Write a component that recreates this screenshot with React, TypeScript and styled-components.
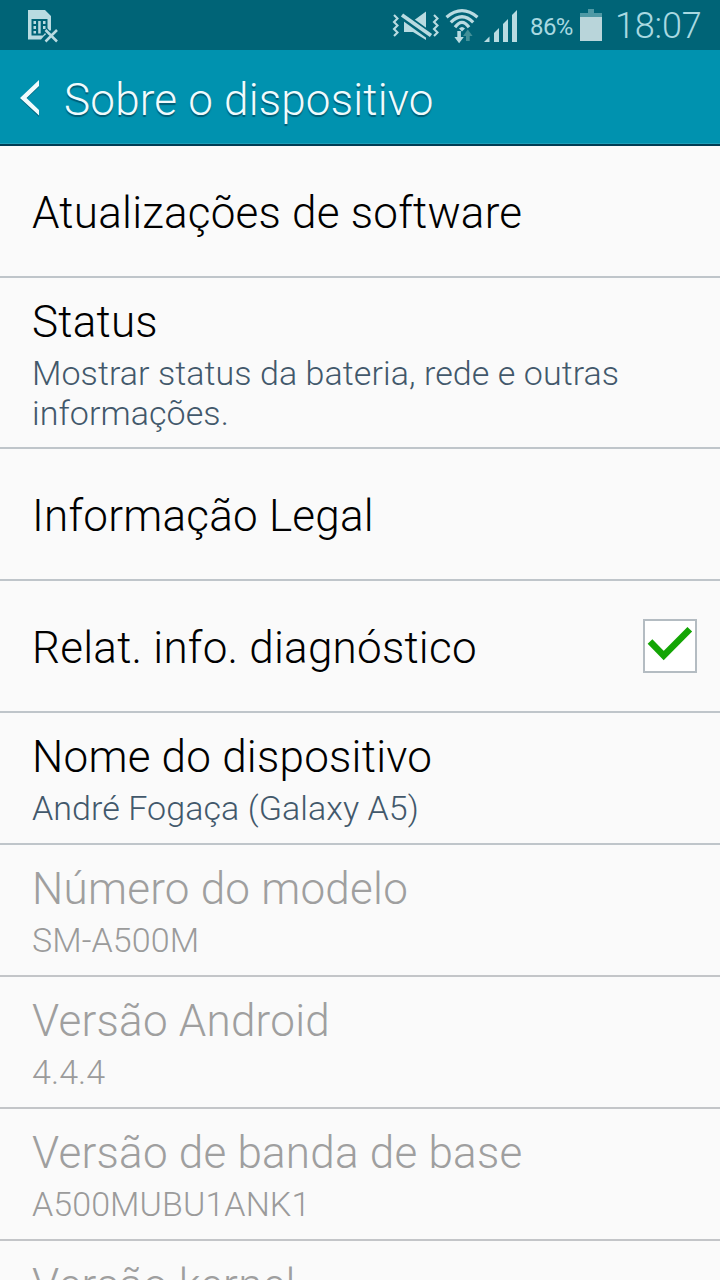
import React from "react";
import styled, { createGlobalStyle } from "styled-components";

const GlobalStyle = createGlobalStyle`
  * { box-sizing: border-box; }
  html, body { margin: 0; padding: 0; }
  body {
    background: #fafafa;
    font-family: Roboto, "Liberation Sans", sans-serif;
    font-weight: 300;
  }
`;

const Screen = styled.div`
  width: 720px;
  height: 1280px;
  overflow: hidden;
  display: flex;
  flex-direction: column;
  background: #fafafa;
`;

const StatusBar = styled.header`
  flex: none;
  height: 50px;
  padding: 0 19px 0 27px;
  display: flex;
  justify-content: space-between;
  background: #006477;
  color: #a9d9e1;
`;

const StatusIcons = styled.div`
  display: flex;
  height: 50px;

  svg { display: block; flex: none; }
`;

const BatteryPercent = styled.span`
  width: 50px;
  padding-left: 10px;
  font-size: 24px;
  line-height: 54px;
  font-weight: 400;
  white-space: nowrap;
  letter-spacing: -0.6px;
`;

const Clock = styled.span`
  width: 88px;
  padding-left: 2px;
  font-size: 36px;
  line-height: 52px;
  letter-spacing: -0.2px;
  white-space: nowrap;
`;

const ActionBar = styled.nav`
  flex: none;
  height: 96px;
  padding-left: 19px;
  display: flex;
  align-items: center;
  background: #0092af;
  border-bottom: 2px solid #003c53;
  box-shadow: inset 0 -1px 0 #1e9fb8;
`;

const BackButton = styled.button`
  width: 45px;
  height: 94px;
  padding: 0;
  border: 0;
  background: none;

  svg { display: block; }
`;

const Title = styled.h1`
  margin: 6px 0 0;
  color: #f0fbfd;
  font-size: 44px;
  line-height: 52px;
  font-weight: 300;
  letter-spacing: 0.2px;
  white-space: nowrap;
  text-shadow: 0 2px 1px rgba(0, 50, 70, 0.55);
`;

const List = styled.main`
  display: flex;
  flex-direction: column;
`;

const Row = styled.section<{ $height?: number; $disabled?: boolean }>`
  flex: none;
  height: ${(p) => p.$height ?? 132}px;
  padding: 0 23px 0 32px;
  display: flex;
  align-items: center;
  justify-content: space-between;
  border-bottom: 2px solid ${(p) => (p.$disabled ? "#c3c5c8" : "#bfc5ca")};
  color: ${(p) => (p.$disabled ? "#9f9f9f" : "#000000")};
`;

const RowText = styled.div`
  padding-top: 3px;
  display: flex;
  flex-direction: column;
`;

const Label = styled.span`
  font-size: 44px;
  line-height: 52px;
  letter-spacing: 0.24px;
  white-space: nowrap;
`;

const Summary = styled.span<{ $disabled?: boolean }>`
  margin-top: 5px;
  color: ${(p) => (p.$disabled ? "#9b9b9b" : "#42586b")};
  font-size: 34px;
  line-height: 40px;
  letter-spacing: 0.07px;
  white-space: pre-line;
`;

const CheckBox = styled.span`
  width: 54px;
  height: 54px;
  border: 2px solid #b4bcc2;
  background: #ffffff;

  svg { display: block; }
`;

interface Item {
  label: string;
  summary?: string;
  height?: number;
  disabled?: boolean;
  checked?: boolean;
}

const items: Item[] = [
  { label: "Atualizações de software" },
  { label: "Status", summary: "Mostrar status da bateria, rede e outras\ninformações.", height: 171 },
  { label: "Informação Legal" },
  { label: "Relat. info. diagnóstico", checked: true },
  { label: "Nome do dispositivo", summary: "André Fogaça (Galaxy A5)" },
  { label: "Número do modelo", summary: "SM-A500M", disabled: true },
  { label: "Versão Android", summary: "4.4.4", disabled: true },
  { label: "Versão de banda de base", summary: "A500MUBU1ANK1", disabled: true },
  { label: "Versão kernel", summary: "3.10.28", disabled: true },
];

const SimIcon = () => (
  <svg width="32" height="50" viewBox="27 0 32 50">
    <path d="M28 10H45L51 16V30L44 36L41 39.5H28Z" fill="#b9dbe1" />
    <path d="M31.5 19H47.5V30L43 35.5H31.5Z" fill="#006477" />
    <g fill="#b9dbe1">
      <path d="M33.5 21H36V24H33.5ZM33.5 26H36V29H33.5ZM33.5 31H36V33.5H33.5Z" />
      <path d="M38.2 21H40.7V33.5H38.2Z" />
      <path d="M43 21H45.5V24H43ZM43 26H45.5V29H43Z" />
    </g>
    <path d="M45.5 30L57 41.5M57 30L45.5 41.5" stroke="#006477" strokeWidth="5" />
    <path d="M45.5 30L57 41.5M57 30L45.5 41.5" stroke="#b9dbe1" strokeWidth="2.5" />
  </svg>
);

const SignalIcons = () => (
  <svg width="128" height="50" viewBox="392 0 128 50" fill="none">
    <g stroke="#b9dbe1" strokeWidth="2.1">
      <path d="M394 15L397.5 18.5L394 22L397.5 25.5L394 29L397.5 32.5L394 36" />
      <path d="M434 15L437.5 18.5L434 22L437.5 25.5L434 29L437.5 32.5L434 36" />
    </g>
    <path d="M404 21H413L426 11.5V40L413 32H404Z" fill="#b9dbe1" />
    <path d="M401 14.6L431 36.2" stroke="#006477" strokeWidth="8" />
    <path d="M402 15L431 35.5" stroke="#b9dbe1" strokeWidth="3.8" />
    <g stroke="#b9dbe1" strokeWidth="3.2">
      <path d="M446.5 17.2Q462 4.2 477.5 17.2" />
      <path d="M450.8 22.3Q462 11.3 473.2 22.3" />
      <path d="M455 27.3Q462 17.5 469 27.3" />
    </g>
    <path d="M459 28.5Q462 25.5 465 28.5L462 31.5Z" fill="#b9dbe1" />
    <path d="M457.3 31H460.9V37H463.8L459.1 43.3L454.4 37H457.3Z" fill="#b9dbe1" />
    <path d="M466 41H469.7V36H472.6L467.8 29.5L463 36H466Z" fill="#429098" />
    <g fill="#b9dbe1">
      <path d="M484 42L489.5 36.5V42Z" />
      <path d="M494 33L499 28V42H494Z" />
      <path d="M503 24L508 19V42H503Z" />
      <path d="M512 15L517 10V42H512Z" />
    </g>
  </svg>
);

const BatteryIcon = () => (
  <svg width="43" height="50" viewBox="570 0 43 50">
    <path d="M588 9H594V13H602V17H580V13H588Z" fill="#4f99a5" />
    <path d="M580 17H602V41H580Z" fill="#b9d5da" />
  </svg>
);

const BackIcon = () => (
  <svg width="24" height="94" viewBox="19 50 24 94">
    <path d="M39 82V87L26.5 99L39 111.5V117L20 99Z" fill="#003f55" opacity="0.55" />
    <path d="M39 80V86L26.5 98L39 110V115.5L20 98Z" fill="#f0fbfd" />
  </svg>
);

const CheckIcon = () => (
  <svg width="50" height="50" viewBox="645 621 50 50" fill="none">
    <path d="M650 641.5L663.7 655.5L689.8 629.2" stroke="#14a505" strokeWidth="6.6" />
  </svg>
);

export default function App() {
  return (
    <Screen>
      <GlobalStyle />
      <StatusBar>
        <StatusIcons>
          <SimIcon />
        </StatusIcons>
        <StatusIcons>
          <SignalIcons />
          <BatteryPercent>86%</BatteryPercent>
          <BatteryIcon />
          <Clock>18:07</Clock>
        </StatusIcons>
      </StatusBar>
      <ActionBar>
        <BackButton aria-label="Voltar">
          <BackIcon />
        </BackButton>
        <Title>Sobre o dispositivo</Title>
      </ActionBar>
      <List>
        {items.map((item) => (
          <Row key={item.label} $height={item.height} $disabled={item.disabled}>
            <RowText>
              <Label>{item.label}</Label>
              {item.summary && <Summary $disabled={item.disabled}>{item.summary}</Summary>}
            </RowText>
            {item.checked && (
              <CheckBox role="checkbox" aria-checked="true">
                <CheckIcon />
              </CheckBox>
            )}
          </Row>
        ))}
      </List>
    </Screen>
  );
}
